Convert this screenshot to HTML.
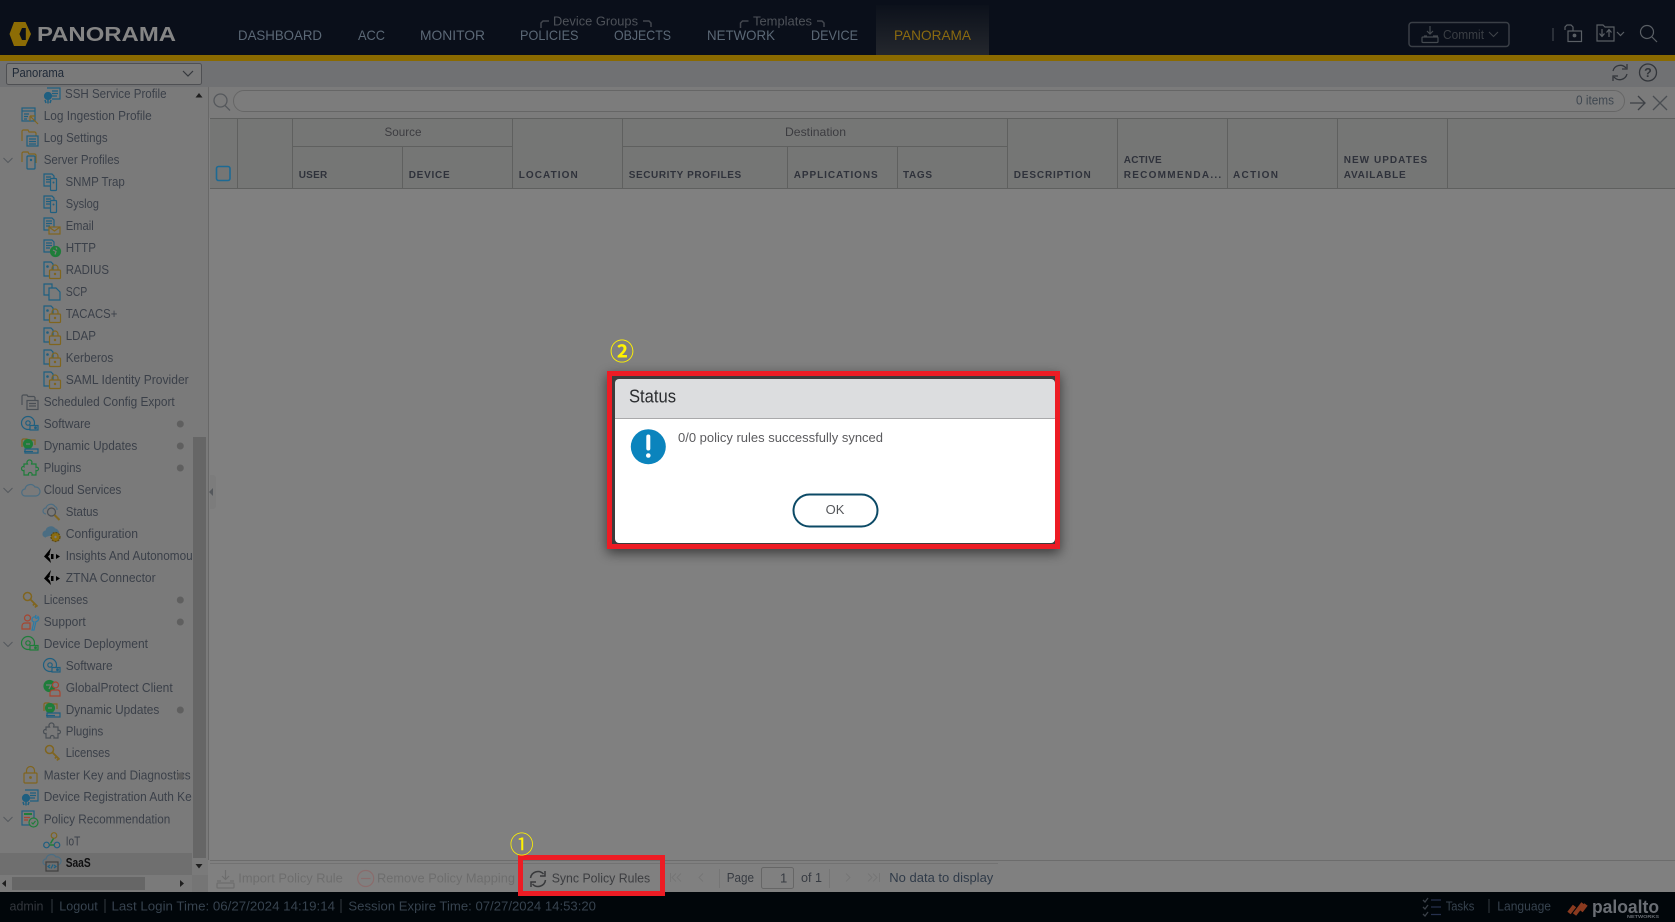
<!DOCTYPE html>
<html lang="en"><head><meta charset="utf-8"><title>Panorama</title>
<style>
html,body{margin:0;padding:0;background:#808080;width:1675px;height:922px;overflow:hidden}
svg{display:block;font-family:"Liberation Sans","Noto Sans CJK JP",sans-serif}
.t{font-size:13px;fill:#3b4049}
.n{font-size:14px;fill:#5b6876}
.h{font-size:10px;font-weight:bold;fill:#2f323b}
.s{font-size:13px;fill:#37434f}
.i{fill:none;stroke-width:1.2}
</style></head><body>
<svg width="1675" height="922" viewBox="0 0 1675 922" xmlns="http://www.w3.org/2000/svg">
<defs>
<linearGradient id="tab" x1="0" y1="0" x2="0" y2="1"><stop offset="0" stop-color="#0c111b"/><stop offset="1" stop-color="#24272d"/></linearGradient>
<filter id="bl" x="-20%" y="-30%" width="140%" height="160%"><feGaussianBlur stdDeviation="6"/></filter>
<clipPath id="sb"><rect x="0" y="87" width="192" height="790"/></clipPath>

<g id="doc" class="i"><path d="M1 1h8l2 2v10H1z" stroke="#1f5f80"/><path d="M3 4h5M3 6.5h5M3 9h4" stroke="#1f5f80"/><rect x="7.5" y="5.5" width="6" height="12" rx="1" fill="#7a7a7a" stroke="#1f5f80"/><circle cx="10.5" cy="9.5" r="1" fill="#1f5f80" stroke="none"/></g>
<g id="mail" class="i"><path d="M1 1h8l2 2v10H1z" stroke="#1f5f80"/><path d="M3 4h6M3 6.5h6M3 9h4" stroke="#1f5f80"/><rect x="6" y="10" width="11" height="7" fill="#7a7a7a" stroke="#80651f"/><path d="M6 10l5.500 4L17 10" stroke="#80651f"/></g>
<g id="http" class="i"><path d="M1 1h8l2 2v10H1z" stroke="#1f5f80"/><path d="M3 4h6M3 6.500h6M3 9h4" stroke="#1f5f80"/><circle cx="12.500" cy="12.500" r="5" fill="#1f7d3a" stroke="#1f7d3a"/><path d="M10 11l3 1.500-1 3M13 8.500l1 2" stroke="#7a7a7a"/></g>
<g id="rad" class="i"><path d="M1 1h7l2 2v12H1z" stroke="#1f5f80"/><circle cx="4.500" cy="5.500" r="1.300" fill="#1f5f80" stroke="none"/><rect x="6.500" y="9" width="11" height="8.500" rx="1" fill="#7a7a7a" stroke="#80651f"/><path d="M9 9V7a3 3 0 0 1 6 0v2" stroke="#80651f"/><circle cx="12" cy="13" r="1.200" fill="#80651f" stroke="none"/></g>
<g id="scp" class="i"><path d="M1 1h8v11H1z" stroke="#1f5f80"/><path d="M6 5h7l4 4v8H6z" fill="#7a7a7a" stroke="#1f5f80"/></g>
<g id="sched" class="i"><path d="M1 12V3l1-1h4l1 1.500h6l1 1V7" stroke="#4a4f55"/><rect x="6" y="7.500" width="11" height="9" fill="#7a7a7a" stroke="#4a4f55"/><path d="M8 10.500h7M8 13h7" stroke="#4a4f55"/></g>
<g id="sw" class="i" stroke="currentColor"><circle cx="7" cy="8" r="6.500" stroke="currentColor"/><circle cx="7" cy="8" r="2.200" stroke="currentColor"/><rect x="9" y="10.500" width="8" height="4.500" fill="#7a7a7a" stroke="currentColor"/><circle cx="14.500" cy="12.700" r=".8" fill="currentColor"/></g>
<g id="dyn" class="i"><path d="M1 10V3l1-1h4l1 1h7v5" stroke="#80651f"/><circle cx="7" cy="7" r="4.500" fill="#1f7d3a" stroke="#1f7d3a"/><path d="M5 7h4" stroke="#7a7a7a"/><path d="M4 12h13v4H4z" fill="#7a7a7a" stroke="#1f5f80"/><path d="M3 14.500h9" stroke="#1f5f80"/></g>
<path id="plug" class="i" stroke="currentColor" d="M6 4a2.500 2.500 0 0 1 5-1c0 1-.5 1.300-.5 2H15v3.500c1-.6 2.500 0 2.500 1.500s-1.500 2-2.500 1.500V16h-4c.5-1.500-.5-2.500-1.800-2.500S7 14.500 7.500 16H3v-4.500C1.500 12 .5 11 .5 9.500S2 7 3 7.800V5h3.500z"/>
<path id="cloud" class="i" stroke="#4b6d82" d="M4.500 15a3.500 3.500 0 0 1-.5-7 5.500 5.500 0 0 1 10-2 4.500 4.500 0 0 1 1 9z"/>
<g id="stat" class="i"><path d="M3 11a3 3 0 0 1 0-6 5 5 0 0 1 9-1.500A3.500 3.500 0 0 1 14 7" stroke="#4b6d82"/><circle cx="8.500" cy="9" r="4" fill="#7a7a7a" stroke="#4a4f55"/><path d="M11.500 12l5 5" stroke="#80651f" stroke-width="2"/></g>
<g id="cfg" class="i"><path d="M3 12a3 3 0 0 1 0-6 5 5 0 0 1 9-2 4 4 0 0 1 3.500 4" fill="#4b6d82" stroke="#4b6d82"/><circle cx="12.500" cy="12" r="4.500" fill="#8a6c10" stroke="#5f4a10" stroke-dasharray="2 1"/><circle cx="12.500" cy="12" r="1.200" fill="#7a7a7a" stroke="none"/></g>
<g id="ins"><path d="M8 0L1 8.500 8 15l-1-4h3.500V6H6.500z" fill="#000"/><path d="M13 6l4 2.500L13 11z" fill="#000"/><path d="M5 8.500L8 5v7z" fill="#7a7a7a"/></g>
<g id="key" class="i"><circle cx="5.500" cy="5.500" r="4" stroke="#80651f" stroke-width="1.500"/><path d="M8.500 8.500l7 7M12.500 12.500l-1.500 2M14.500 14.500l-1.500 2" stroke="#80651f" stroke-width="1.800"/></g>
<g id="sup" class="i"><circle cx="6.500" cy="5" r="3" stroke="#a8442f"/><path d="M1 16v-3a3 3 0 0 1 3-3h5v6z" stroke="#a8442f"/><path d="M11 17l2-8a2.500 2.500 0 0 1 1-5l1-2-.5 3 1.500.5 1-2a3 3 0 0 1-2 5l-2 8.500z" stroke="#2b7aa5"/></g>
<g id="gp" class="i"><circle cx="6.500" cy="7" r="5.500" fill="#1f7d3a" stroke="#1f7d3a"/><path d="M3 6h5l-2 4" stroke="#7a7a7a"/><circle cx="12.500" cy="6" r="3" fill="#7a7a7a" stroke="#a8442f"/><path d="M7 17v-3a3 3 0 0 1 3-3h5a3 3 0 0 1 2 3v3z" fill="#7a7a7a" stroke="#a8442f"/></g>
<g id="lock" class="i"><rect x="2" y="7" width="13" height="10" rx="1" stroke="#80651f"/><path d="M4.500 7V4.500a4 4 0 0 1 8 0V7" stroke="#80651f"/><circle cx="8.500" cy="11.500" r="1.400" fill="#80651f" stroke="none"/></g>
<g id="reg" class="i"><path d="M4 2h13v11H9" stroke="#1f5f80"/><path d="M9 5h6M9 7.500h6M9 10h5" stroke="#1f5f80"/><circle cx="5" cy="10" r="3.500" fill="#1f5f80" stroke="#1f5f80"/><path d="M2 14l1 3M5 14v3.500M8 14l-1 3" stroke="#1f5f80" stroke-width="1.500"/></g>
<g id="pol" class="i"><rect x="1" y="1" width="12" height="14" stroke="#1f5f80"/><path d="M3 4h8" stroke="#1f7d3a" stroke-width="2"/><path d="M3 7.500h6M3 10h4" stroke="#a8442f"/><circle cx="12.500" cy="12.500" r="4.500" fill="#7a7a7a" stroke="#1f7d3a"/><path d="M10.500 12.500l1.500 1.500 2.500-3" stroke="#1f7d3a"/></g>
<g id="iot" class="i"><circle cx="3.500" cy="13" r="2.800" stroke="#1f5f80"/><circle cx="14" cy="13" r="2.800" stroke="#1f5f80"/><circle cx="11" cy="3.500" r="2.800" stroke="#80651f"/><path d="M6.500 13h4.500M10.500 6.500l-3 5" stroke="#1f7d3a" stroke-width="1.500"/></g>
<g id="saas" class="i"><path d="M3 11a3 3 0 0 1 0-6 5.500 5.500 0 0 1 10-2 4 4 0 0 1 2 8" stroke="#4b6d82"/><rect x="3" y="8" width="12" height="9" fill="#6e6e6e" stroke="#3f3f3f"/><path d="M7 11l-2 1.500L7 14M11 11l2 1.500L11 14M8 14.500l2-4" stroke="#1f5f80"/></g>
<g id="logi" class="i"><rect x="1" y="1" width="13" height="13" stroke="#1f5f80"/><path d="M1 4h13" stroke="#1f5f80"/><path d="M3 7h5M3 9.500h4M3 12h3" stroke="#1f5f80"/><path d="M9 9l8 8M9 9h5M9 9v5" stroke="#80651f"/></g>
<g id="logs" class="i"><path d="M1 12V2l1-1h5l1 2h6l1 1v4" stroke="#80651f"/><rect x="6" y="7" width="11" height="10" fill="#7a7a7a" stroke="#1f5f80"/><path d="M8 10h7M8 12.500h7M8 15h7" stroke="#1f5f80"/></g>
<g id="srvp" class="i"><path d="M1 11V2l1-1h5l1 2h6l1 1v8" stroke="#80651f"/><rect x="6" y="5" width="8" height="13" rx="1" fill="#7a7a7a" stroke="#1f5f80"/><circle cx="10" cy="9" r="1.200" fill="#1f5f80" stroke="none"/></g>
<path id="chev" d="M0 0l4.500 4.500L9 0" fill="none" stroke="#565a5e" stroke-width="1.100"/>
</defs>

<!-- base -->
<rect width="1675" height="922" fill="#808080"/>
<!-- top bar -->
<rect width="1675" height="55" fill="#0a0f1a"/>
<rect x="876" y="5" width="113" height="50" fill="url(#tab)"/>
<rect y="55" width="1675" height="6" fill="#8a6a00"/>
<rect y="61" width="1675" height="26" fill="#707173"/>
<!-- logo -->
<path d="M14 22h11.500l5.500 12-5.500 12H14L9.500 34z" fill="#8c6c05"/>
<path d="M22 28h3.800v12H22l-2.600-6z" fill="#0a0f1a"/>
<text x="37" y="41" font-size="20" font-weight="bold" fill="#858585" textLength="139" lengthAdjust="spacingAndGlyphs">PANORAMA</text>
<!-- nav -->
<text class="n" x="238" y="40" textLength="84" lengthAdjust="spacingAndGlyphs">DASHBOARD</text>
<text class="n" x="358" y="40" textLength="27" lengthAdjust="spacingAndGlyphs">ACC</text>
<text class="n" x="420" y="40" textLength="65" lengthAdjust="spacingAndGlyphs">MONITOR</text>
<text class="n" x="520" y="40" textLength="58.500" lengthAdjust="spacingAndGlyphs">POLICIES</text>
<text class="n" x="614" y="40" textLength="57" lengthAdjust="spacingAndGlyphs">OBJECTS</text>
<text class="n" x="707" y="40" textLength="68" lengthAdjust="spacingAndGlyphs">NETWORK</text>
<text class="n" x="811" y="40" textLength="47" lengthAdjust="spacingAndGlyphs">DEVICE</text>
<text class="n" x="894" y="40" textLength="77" lengthAdjust="spacingAndGlyphs" style="fill:#8a6a10">PANORAMA</text>
<text x="553" y="25.500" font-size="13" fill="#4e5259" textLength="85" lengthAdjust="spacingAndGlyphs">Device Groups</text>
<text x="753" y="25.500" font-size="13" fill="#4e5259" textLength="59" lengthAdjust="spacingAndGlyphs">Templates</text>
<g fill="none" stroke="#43474e" stroke-width="1.500">
<path d="M541 28v-5l2-2h6"/><path d="M643 21h6l2 2v4"/><path d="M740.500 28v-5l2-2h6"/><path d="M817 21h5l2 2v4"/>
</g>
<!-- commit -->
<rect x="1409" y="22.500" width="100" height="24" rx="3" fill="none" stroke="#3a3f46" stroke-width="1.500"/>
<g fill="none" stroke="#44494f" stroke-width="1.200">
<path d="M1430 26v8M1427 31l3 3 3-3M1424 36h3M1433 36h5"/><rect x="1422" y="37" width="16" height="5.500" rx="1"/>
</g>
<text x="1443" y="39" font-size="13" fill="#3a3e44" textLength="41" lengthAdjust="spacingAndGlyphs">Commit</text>
<use href="#chev" x="1489" y="32" style="opacity:.7"/>
<path d="M1553 28v13" stroke="#4a4f55" stroke-width="1"/>
<g fill="none" stroke="#5a5f65" stroke-width="1.200">
<rect x="1568" y="31" width="13.500" height="10.500"/><path d="M1565 30v-3l2-2h4l2 2v4"/><circle cx="1574.500" cy="35.500" r="1.300" fill="#5a5f65"/>
<path d="M1597 41V25h6l2 2h9v14z"/><path d="M1602 29v7M1599.500 33.500l2.500 3 2.500-3M1609 37v-7M1606.500 32.500l2.500-3 2.500 3"/>
<path d="M1617 32l3.500 3.500L1624 32"/>
<circle cx="1647" cy="32" r="6.500"/><path d="M1652 37l5 5"/>
</g>
<!-- dropdown -->
<rect x="6.500" y="63.500" width="195" height="21" rx="2" fill="#7a7a7a" stroke="#4f5053"/>
<text x="12" y="77" font-size="12.500" fill="#1f2937" textLength="52" lengthAdjust="spacingAndGlyphs">Panorama</text>
<path d="M183 71l5 5 5-5" fill="none" stroke="#35383d" stroke-width="1.200"/>
<!-- refresh/help -->
<g fill="none" stroke="#32353a" stroke-width="1.300">
<path d="M1613 71a7.500 7.500 0 0 1 13-3M1627 74a7.500 7.500 0 0 1-13 3"/><path d="M1627 64v5h-5M1613 81v-5h5"/>
<circle cx="1648" cy="72.500" r="8.500"/>
</g>
<text x="1648" y="77" font-size="12.500" font-weight="bold" text-anchor="middle" fill="#32353a">?</text>

<!-- sidebar -->
<rect x="0" y="87" width="208" height="805" fill="#7a7a7a"/>
<rect x="0" y="853" width="192" height="22" fill="#6f6f6f"/>
<rect x="208" y="87" width="1" height="773" fill="#686868"/>
<rect x="193" y="87" width="15" height="790" fill="#7a7a7a"/>
<rect x="193" y="437" width="13" height="421" fill="#666"/>
<path d="M199 93l3.500 4.500h-7zM195.500 864h7l-3.500 4.500z" fill="#1f1f1f"/>
<rect x="0" y="875" width="208" height="17" fill="#7a7a7a"/>
<rect x="192" y="875" width="16" height="17" fill="#757575"/>
<rect x="12" y="877" width="133" height="13" fill="#666"/>
<path d="M6 880v7l-4-3.500zM180 880v7l4-3.500z" fill="#1f1f1f"/>
<path d="M210 475h4l2 2v30l-2 2h-4z" fill="#7c7c7c"/>
<path d="M213 488v8l-4-4z" fill="#55585c"/>

<!-- tree -->
<g clip-path="url(#sb)">
<g class="t" transform="translate(0 -.5)">
<text class="t" x="65" y="98.500" textLength="101.500" lengthAdjust="spacingAndGlyphs">SSH Service Profile</text>
<text class="t" x="43.700" y="120.500" textLength="108" lengthAdjust="spacingAndGlyphs">Log Ingestion Profile</text>
<text class="t" x="43.700" y="142.500" textLength="64" lengthAdjust="spacingAndGlyphs">Log Settings</text>
<text class="t" x="43.700" y="164.500" textLength="75.700" lengthAdjust="spacingAndGlyphs">Server Profiles</text>
<text class="t" x="65.500" y="186.500" textLength="59.300" lengthAdjust="spacingAndGlyphs">SNMP Trap</text>
<text class="t" x="65.700" y="208.500" textLength="33.300" lengthAdjust="spacingAndGlyphs">Syslog</text>
<text class="t" x="65.700" y="230.500" textLength="28" lengthAdjust="spacingAndGlyphs">Email</text>
<text class="t" x="65.700" y="252.500" textLength="30.300" lengthAdjust="spacingAndGlyphs">HTTP</text>
<text class="t" x="65.700" y="274.500" textLength="43.300" lengthAdjust="spacingAndGlyphs">RADIUS</text>
<text class="t" x="65.700" y="296.500" textLength="21.600" lengthAdjust="spacingAndGlyphs">SCP</text>
<text class="t" x="65.700" y="318.500" textLength="51.600" lengthAdjust="spacingAndGlyphs">TACACS+</text>
<text class="t" x="65.700" y="340.500" textLength="30.300" lengthAdjust="spacingAndGlyphs">LDAP</text>
<text class="t" x="65.700" y="362.500" textLength="47.600" lengthAdjust="spacingAndGlyphs">Kerberos</text>
<text class="t" x="65.700" y="384.500" textLength="123" lengthAdjust="spacingAndGlyphs">SAML Identity Provider</text>
<text class="t" x="43.700" y="406.500" textLength="131" lengthAdjust="spacingAndGlyphs">Scheduled Config Export</text>
<text class="t" x="43.700" y="428.500" textLength="47" lengthAdjust="spacingAndGlyphs">Software</text>
<text class="t" x="43.700" y="450.500" textLength="93.600" lengthAdjust="spacingAndGlyphs">Dynamic Updates</text>
<text class="t" x="43.700" y="472.500" textLength="37.600" lengthAdjust="spacingAndGlyphs">Plugins</text>
<text class="t" x="43.700" y="494.500" textLength="77.600" lengthAdjust="spacingAndGlyphs">Cloud Services</text>
<text class="t" x="65.700" y="516.500" textLength="32.600" lengthAdjust="spacingAndGlyphs">Status</text>
<text class="t" x="65.700" y="538.500" textLength="72.300" lengthAdjust="spacingAndGlyphs">Configuration</text>
<text class="t" x="65.700" y="560.500" textLength="127" lengthAdjust="spacingAndGlyphs">Insights And Autonomou</text>
<text class="t" x="65.700" y="582.500" textLength="90" lengthAdjust="spacingAndGlyphs">ZTNA Connector</text>
<text class="t" x="43.700" y="604.500" textLength="44.300" lengthAdjust="spacingAndGlyphs">Licenses</text>
<text class="t" x="43.700" y="626.500" textLength="42" lengthAdjust="spacingAndGlyphs">Support</text>
<text class="t" x="43.700" y="648.500" textLength="104.300" lengthAdjust="spacingAndGlyphs">Device Deployment</text>
<text class="t" x="65.700" y="670.500" textLength="47" lengthAdjust="spacingAndGlyphs">Software</text>
<text class="t" x="65.700" y="692.500" textLength="107" lengthAdjust="spacingAndGlyphs">GlobalProtect Client</text>
<text class="t" x="65.700" y="714.500" textLength="93.600" lengthAdjust="spacingAndGlyphs">Dynamic Updates</text>
<text class="t" x="65.700" y="736" textLength="37.600" lengthAdjust="spacingAndGlyphs">Plugins</text>
<text class="t" x="65.700" y="757.500" textLength="44.300" lengthAdjust="spacingAndGlyphs">Licenses</text>
<text class="t" x="43.700" y="780" textLength="147" lengthAdjust="spacingAndGlyphs">Master Key and Diagnostics</text>
<text class="t" x="43.700" y="801.500" textLength="148" lengthAdjust="spacingAndGlyphs">Device Registration Auth Ke</text>
<text class="t" x="43.700" y="824" textLength="126.600" lengthAdjust="spacingAndGlyphs">Policy Recommendation</text>
<text class="t" x="65.700" y="846" textLength="14.600" lengthAdjust="spacingAndGlyphs">IoT</text>
<text class="t" x="65.700" y="867.500" textLength="25" lengthAdjust="spacingAndGlyphs" font-weight="bold" style="fill:#0f0f10;font-weight:bold">SaaS</text>
</g>
<use href="#reg" x="43" y="86"/>
<use href="#logi" x="21" y="107"/>
<use href="#logs" x="21" y="129"/>
<use href="#srvp" x="21" y="151"/>
<use href="#doc" x="43" y="173"/>
<use href="#doc" x="43" y="195"/>
<use href="#mail" x="43" y="217"/>
<use href="#http" x="43" y="239"/>
<use href="#rad" x="43" y="261"/>
<use href="#scp" x="43" y="283"/>
<use href="#rad" x="43" y="305"/>
<use href="#rad" x="43" y="327"/>
<use href="#rad" x="43" y="349"/>
<use href="#rad" x="43" y="371"/>
<use href="#sched" x="21" y="393"/>
<use href="#sw" x="21" y="415" style="color:#1f5f80"/>
<use href="#dyn" x="21" y="437"/>
<use href="#plug" x="21" y="459" style="color:#1f7d3a"/>
<use href="#cloud" x="21" y="481"/>
<use href="#stat" x="43" y="503"/>
<use href="#cfg" x="43" y="525"/>
<use href="#ins" x="43" y="548"/>
<use href="#ins" x="43" y="570"/>
<use href="#key" x="22" y="591"/>
<use href="#sup" x="21" y="613"/>
<use href="#sw" x="21" y="635" style="color:#1f7d3a"/>
<use href="#sw" x="43" y="657" style="color:#1f5f80"/>
<use href="#gp" x="43" y="679"/>
<use href="#dyn" x="43" y="701"/>
<use href="#plug" x="43" y="722" style="color:#4a4f55"/>
<use href="#key" x="44" y="744"/>
<use href="#lock" x="22" y="766"/>
<use href="#reg" x="21" y="788"/>
<use href="#pol" x="21" y="810"/>
<use href="#iot" x="43" y="832"/>
<use href="#saas" x="43" y="854"/>
</g>
<use href="#chev" x="3.500" y="158" />
<use href="#chev" x="3.500" y="488" />
<use href="#chev" x="3.500" y="642" />
<use href="#chev" x="3.500" y="817" />
<g fill="#5f5f5f">
<circle cx="180.300" cy="424" r="3.500"/><circle cx="180.300" cy="446" r="3.500"/><circle cx="180.300" cy="468" r="3.500"/><circle cx="180.300" cy="600" r="3.500"/><circle cx="180.300" cy="622" r="3.500"/><circle cx="180.300" cy="710" r="3.500"/><circle cx="180.300" cy="776" r="3.500"/>
</g>

<!-- search row -->
<rect x="209" y="87" width="1466" height="31" fill="#7b7b7b"/>
<rect x="233.500" y="90.500" width="1391" height="21" rx="10.500" fill="#7c7c7c" stroke="#666" />
<g fill="none" stroke="#55585c" stroke-width="1.300">
<circle cx="220.500" cy="100.500" r="6.500"/><path d="M225 105.500l5 5"/>
<path d="M1630 103h15M1638 96l7 7-7 7" stroke="#3d4045"/>
<path d="M1653 96l14 14M1667 96l-14 14" stroke="#4a4d52"/>
</g>
<text x="1576" y="104.500" font-size="12.500" fill="#3f4750" textLength="38" lengthAdjust="spacingAndGlyphs">0 items</text>

<!-- table -->
<rect x="210" y="118" width="1465" height="70" fill="#757675"/>
<g stroke="#5f605f" stroke-width="1" fill="none">
<path d="M210 118.500H1675M210 188.500H1675"/>
<path d="M237.500 118v70M292.500 118v70M512.500 118v70M622.500 118v70M1007.500 118v70M1117.500 118v70M1227.500 118v70M1337.500 118v70M1447.500 118v70"/>
<path d="M292.500 146.500H512M622.500 146.500H1007M402.500 146v42M787.500 146v42M897.500 146v42"/>
</g>
<rect x="216.500" y="166.500" width="13.500" height="14" rx="2" fill="none" stroke="#1d6a94" stroke-width="1.600"/>
<text x="384.500" y="136" font-size="12" fill="#3c3c40" textLength="37" lengthAdjust="spacingAndGlyphs">Source</text>
<text x="785" y="136" font-size="12" fill="#3c3c40" textLength="61" lengthAdjust="spacingAndGlyphs">Destination</text>
<text class="h" x="298.700" y="178" textLength="28.500">USER</text>
<text class="h" x="408.700" y="178" textLength="41">DEVICE</text>
<text class="h" x="518.700" y="178" textLength="59">LOCATION</text>
<text class="h" x="628.700" y="178" textLength="112.500">SECURITY PROFILES</text>
<text class="h" x="793.700" y="178" textLength="84">APPLICATIONS</text>
<text class="h" x="903" y="178" textLength="29">TAGS</text>
<text class="h" x="1013.700" y="178" textLength="77">DESCRIPTION</text>
<text class="h" x="1123.700" y="163" textLength="38">ACTIVE</text>
<text class="h" x="1123.700" y="178" textLength="97.500">RECOMMENDA...</text>
<text class="h" x="1233" y="178" textLength="45">ACTION</text>
<text class="h" x="1343.700" y="163" textLength="83.500">NEW UPDATES</text>
<text class="h" x="1343.700" y="178" textLength="62">AVAILABLE</text>

<!-- bottom toolbar -->
<path d="M210 860.500H1675" stroke="#6c6c6c"/>
<path d="M210 863.500H998" stroke="#727272"/>
<g fill="none" stroke="#6d6d6d" stroke-width="1.200">
<path d="M225.500 870v9M222 876l3.500 3.500 3.500-3.500M217 881h4M230 881h4"/><rect x="217" y="883" width="17" height="5" rx="1"/>
</g>
<text x="238.300" y="882.500" font-size="13" fill="#6d6d6d" textLength="104.500" lengthAdjust="spacingAndGlyphs">Import Policy Rule</text>
<circle cx="365.700" cy="878.500" r="8" fill="none" stroke="#8a6c6c" stroke-width="1.200"/>
<path d="M361 878.500h9.500" stroke="#8a6c6c" stroke-width="1.200"/>
<text x="377" y="882.500" font-size="13" fill="#6d6d6d" textLength="138" lengthAdjust="spacingAndGlyphs">Remove Policy Mapping</text>
<g fill="none" stroke="#38393b" stroke-width="1.500">
<path d="M530.500 878a7.500 7.500 0 0 1 13-4M545.500 880a7.500 7.500 0 0 1-13 4"/><path d="M545 871v5h-5M531 887v-5h5"/>
</g>
<text x="551.700" y="882.500" font-size="13" fill="#3c3d40" textLength="98.500" lengthAdjust="spacingAndGlyphs">Sync Policy Rules</text>
<path d="M670.500 873v9M681 873.500l-4 4 4 4M676 873.500l-4 4 4 4M703 873.500l-4 4 4 4M719.500 869v19M829.500 869v19M846 873.500l4 4-4 4M868 873.500l4 4-4 4M873 873.500l4 4-4 4M879.500 873v9" fill="none" stroke="#757575"/>
<text x="726.700" y="882" font-size="13" fill="#373b42" textLength="27.300" lengthAdjust="spacingAndGlyphs">Page</text>
<rect x="761.500" y="867.500" width="32" height="21" rx="2" fill="#808080" stroke="#666"/>
<text x="780" y="882.500" font-size="13" fill="#373b42">1</text>
<text x="801" y="882" font-size="13" fill="#373b42" textLength="21" lengthAdjust="spacingAndGlyphs">of 1</text>
<text x="889.300" y="882" font-size="13" fill="#2f3a48" textLength="104" lengthAdjust="spacingAndGlyphs">No data to display</text>

<!-- status bar -->
<rect y="892" width="1675" height="30" fill="#01060a"/>
<text class="s" x="9.500" y="910.500" textLength="34" lengthAdjust="spacingAndGlyphs" style="fill:#33373d">admin</text>
<text class="s" x="59.300" y="910.500" textLength="38.400" lengthAdjust="spacingAndGlyphs">Logout</text>
<text class="s" x="111.500" y="910.500" textLength="223.500" lengthAdjust="spacingAndGlyphs">Last Login Time: 06/27/2024 14:19:14</text>
<text class="s" x="348.400" y="910.500" textLength="247.600" lengthAdjust="spacingAndGlyphs">Session Expire Time: 07/27/2024 14:53:20</text>
<path d="M52 899v14M105 899v14M341 899v14M1489 899v14" stroke="#333940"/>
<g fill="none" stroke="#26304d" stroke-width="1.300">
<path d="M1431 900h10M1431 907h10M1431 914.500h10"/><path d="M1423 900l2 2 3-4M1423 907l2 2 3-4M1423 914l2 2 3-4" stroke="#3a4048"/>
</g>
<text class="s" x="1445.700" y="910.500" textLength="28.600" lengthAdjust="spacingAndGlyphs">Tasks</text>
<text class="s" x="1497.300" y="910.500" textLength="53.700" lengthAdjust="spacingAndGlyphs">Language</text>
<path d="M1569 913l5.500-7M1574.500 914.500l8.500-11M1581 911l5-6.500" fill="none" stroke="#8a3a1f" stroke-width="4.200"/>
<text x="1592" y="913" font-size="18" font-weight="bold" fill="#6a6e74" textLength="67" lengthAdjust="spacingAndGlyphs">paloalto</text>
<text x="1627" y="918" font-size="4.500" font-weight="bold" fill="#6a6e74" textLength="32" lengthAdjust="spacingAndGlyphs">NETWORKS</text>

<!-- sync highlight -->
<rect x="520.500" y="857.500" width="142" height="36" fill="none" stroke="#ed1c24" stroke-width="5"/>
<text x="521.700" y="853" font-size="24" text-anchor="middle" fill="#fff200" font-family="'Noto Sans CJK JP',sans-serif">①</text>

<!-- dialog -->
<rect x="607" y="371" width="453" height="178" fill="#000" opacity=".55" filter="url(#bl)" transform="translate(0 4)"/>
<rect x="612" y="376" width="443" height="168" fill="#3c3c3c"/>
<path d="M619 379h432a4 4 0 0 1 4 4v35H615v-35a4 4 0 0 1 4-4z" fill="#dcdddf"/>
<path d="M615 418h440v121a4 4 0 0 1-4 4H619a4 4 0 0 1-4-4z" fill="#fff"/>
<path d="M615 418.500h440" stroke="#a9a9ab" stroke-width="1"/>
<rect x="609.500" y="373.500" width="448" height="173" fill="none" stroke="#ed1c24" stroke-width="5"/>
<text x="629" y="402.700" font-size="18" fill="#2b2d30" textLength="47" lengthAdjust="spacingAndGlyphs">Status</text>
<circle cx="648.300" cy="446.700" r="17.500" fill="#0b84bd"/>
<rect x="646.300" y="434.500" width="4" height="16" rx="2" fill="#fff"/>
<circle cx="648.300" cy="455.500" r="2.300" fill="#fff"/>
<text x="678" y="442" font-size="13" fill="#5b5b5e" textLength="205" lengthAdjust="spacingAndGlyphs">0/0 policy rules successfully synced</text>
<rect x="793.500" y="494.500" width="84" height="32" rx="16" fill="#fff" stroke="#0c4a66" stroke-width="2"/>
<text x="835" y="514" font-size="13" text-anchor="middle" fill="#55575b">OK</text>
<text x="622" y="360" font-size="24" font-weight="bold" text-anchor="middle" fill="#fff200" font-family="'Noto Sans CJK JP',sans-serif">②</text>
</svg>
</body></html>
